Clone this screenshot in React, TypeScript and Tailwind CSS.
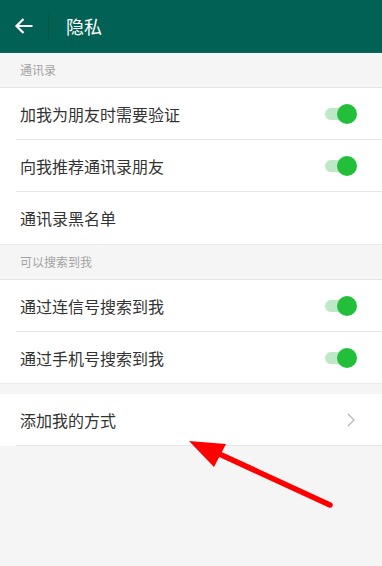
import React from "react";

const font = { fontFamily: '"Noto Sans CJK SC", "Noto Sans", sans-serif' };

function Toggle() {
  return (
    <div className="relative w-[32px] h-[20px] mr-[3px]">
      <div className="absolute left-0 top-[4px] w-[28px] h-[12px] rounded-full bg-[#bde9c6]" />
      <div className="absolute right-0 top-0 w-[20px] h-[20px] rounded-full bg-[#23bf3a]" />
    </div>
  );
}

function Chevron() {
  return (
    <svg width="10" height="16" viewBox="0 0 10 16" className="mr-[4px]">
      <path d="M2 2 L8 8 L2 14" fill="none" stroke="#b8b8b8" strokeWidth="1.3" />
    </svg>
  );
}

function Row({
  label,
  right,
  last,
  short,
}: {
  label: string;
  right?: React.ReactNode;
  last?: boolean;
  short?: boolean;
}) {
  return (
    <div className="bg-white pl-[16px]">
      <div
        className={`flex items-center justify-between pl-[4px] pr-[22px] ${short ? "h-[51px]" : "h-[52px]"} ${
          last ? "" : "border-b border-[#e6e6e6]"
        }`}
      >
        <span className="text-[16px] text-[#333]">{label}</span>
        {right}
      </div>
    </div>
  );
}

function SectionHeader({ title, top }: { title: string; top?: boolean }) {
  return (
    <div
      className={`flex items-center px-[20px] border-b border-[#e6e6e6] bg-[#f5f5f5] ${
        top ? "h-[36px] border-t border-t-[#ececec]" : "h-[35px]"
      }`}
    >
      <span className="text-[12px] text-[#a3a3a3]">{title}</span>
    </div>
  );
}

export default function App() {
  return (
    <div className="relative w-[382px] h-[566px] bg-[#f5f5f5] overflow-hidden" style={font}>
      <div className="h-[53px] bg-[#016155] flex items-center border-b border-[#0c6a5e]">
        <div className="w-[48px] flex justify-center">
          <svg width="20" height="18" viewBox="0 0 20 18">
            <path d="M18.5 9 H3 M9.5 2 L2.5 9 L9.5 16" fill="none" stroke="#fff" strokeWidth="2.2" />
          </svg>
        </div>
        <div className="w-px h-[26px] bg-[#00544a]" />
        <span className="ml-[17px] text-[18px] text-white">隐私</span>
      </div>

      <SectionHeader title="通讯录" />
      <Row label="加我为朋友时需要验证" right={<Toggle />} />
      <Row label="向我推荐通讯录朋友" right={<Toggle />} />
      <Row label="通讯录黑名单" last />

      <SectionHeader title="可以搜索到我" top />
      <Row label="通过连信号搜索到我" right={<Toggle />} />
      <Row label="通过手机号搜索到我" right={<Toggle />} last short />

      <div className="h-[11px] border-t border-[#ececec]" />
      <Row label="添加我的方式" right={<Chevron />} />

      <svg className="absolute left-0 top-0" width="382" height="566" viewBox="0 0 382 566">
        <line x1="330" y1="505" x2="215" y2="452" stroke="#ff0000" strokeWidth="5.5" strokeLinecap="round" />
        <polygon points="189,441 226,444 214,467" fill="#ff0000" />
      </svg>
    </div>
  );
}
